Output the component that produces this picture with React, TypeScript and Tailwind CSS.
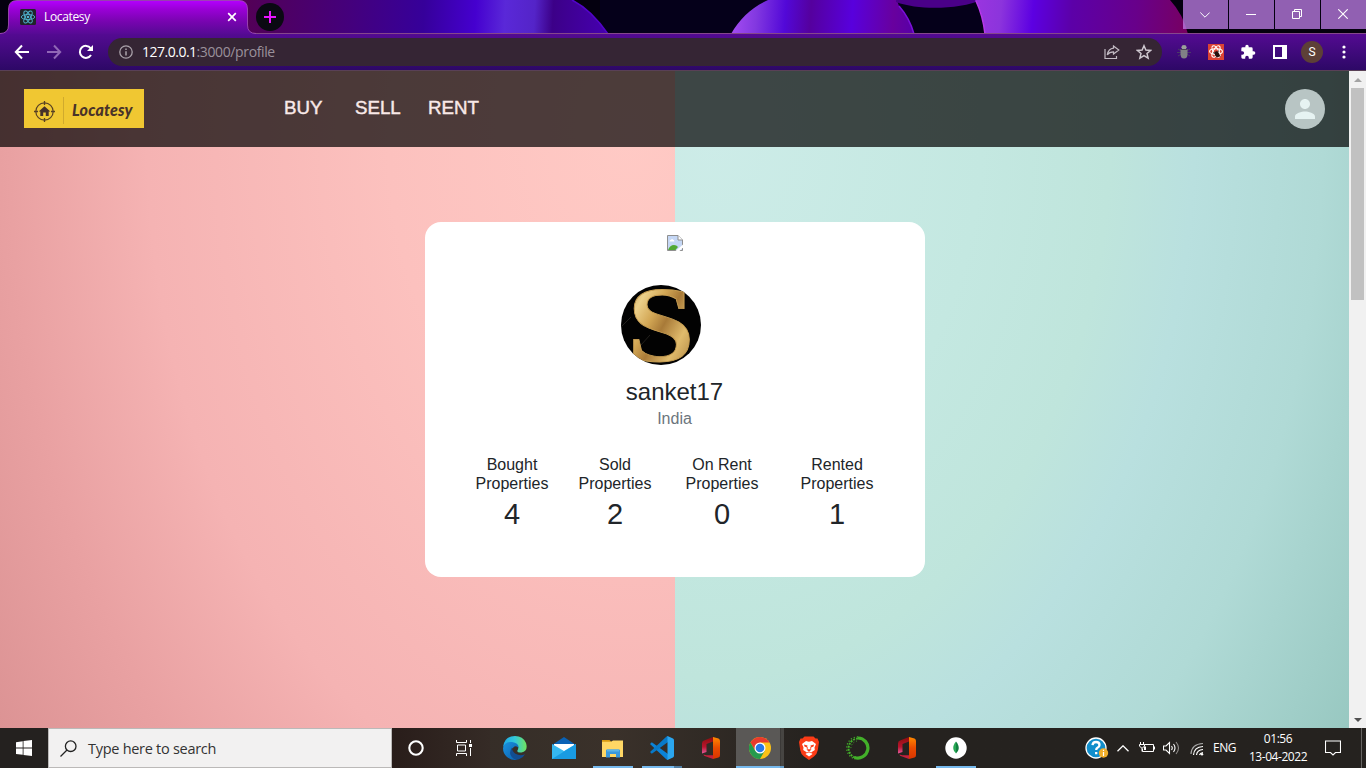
import React from "react";

const ui = "font-['Open_Sans','Noto_Sans',sans-serif]";

function StripArt() {
  return (
    <svg className="absolute inset-0" width="1366" height="34" viewBox="0 0 1366 34">
      <defs>
        <linearGradient id="orbA" gradientUnits="userSpaceOnUse" x1="240" y1="0" x2="608" y2="20">
          <stop offset="0" stopColor="#540054" />
          <stop offset=".3" stopColor="#44007c" />
          <stop offset=".5" stopColor="#36009a" />
          <stop offset=".64" stopColor="#4500cf" />
          <stop offset=".72" stopColor="#5a28d8" />
          <stop offset=".8" stopColor="#5424c8" />
          <stop offset=".85" stopColor="#3c0088" />
          <stop offset="1" stopColor="#4600b0" />
        </linearGradient>
        <linearGradient id="orbB" gradientUnits="userSpaceOnUse" x1="735" y1="10" x2="915" y2="22">
          <stop offset="0" stopColor="#a14af0" />
          <stop offset=".12" stopColor="#8238e0" />
          <stop offset=".28" stopColor="#5208d8" />
          <stop offset=".42" stopColor="#55009e" />
          <stop offset=".65" stopColor="#5800dd" />
          <stop offset=".88" stopColor="#68009e" />
          <stop offset="1" stopColor="#5700a8" />
        </linearGradient>
        <linearGradient id="orbC" gradientUnits="userSpaceOnUse" x1="976" y1="0" x2="1190" y2="20">
          <stop offset="0" stopColor="#9a35df" />
          <stop offset=".12" stopColor="#8c34dc" />
          <stop offset=".27" stopColor="#5c00e2" />
          <stop offset=".45" stopColor="#5c00a8" />
          <stop offset=".75" stopColor="#68008a" />
          <stop offset="1" stopColor="#780060" />
        </linearGradient>
        <linearGradient id="tabFill" x1="0" y1="0" x2="0" y2="1">
          <stop offset="0" stopColor="#b400ff" />
          <stop offset=".25" stopColor="#9b00d8" />
          <stop offset=".6" stopColor="#7a04b2" />
          <stop offset="1" stopColor="#560a94" />
        </linearGradient>
      </defs>
      <rect width="1366" height="34" fill="#04000f" />
      <rect x="600" width="390" height="34" fill="#05001a" />
      <path d="M200 0H572C588 8 599 21 608 34H200Z" fill="url(#orbA)" />
      <path d="M572 0C588 8 599 21 608 34" fill="none" stroke="#5204c8" strokeWidth="1.500" />
      <path d="M731 34C740 18 752 7 768 0H897L899 6C906 14 911 23 914 34Z" fill="url(#orbB)" />
      <path d="M899 6C906 14 911 23 914 34" fill="none" stroke="#7a10d8" strokeWidth="1.500" />
      <path d="M896 0H982C960 9 920 11 896 2Z" fill="#4a0088" />
      <path d="M975 0H1170Q1183 14 1188 34H985Q983 14 975 0Z" fill="url(#orbC)" />
      <path d="M976 1Q983 16 985 34" fill="none" stroke="#b838e8" strokeWidth="1.500" />
      <path d="M0 33.500H1366" stroke="#85478c" />
      <path d="M0 34V33.500Q8.500 33 8.500 25V9Q8.500 .5 17 .5H239Q247.500 .5 247.500 9V25Q247.500 33.500 256 33.500V34Z" fill="url(#tabFill)" />
      <path d="M0 33.500Q8.500 33.500 8.500 25V9Q8.500 .5 17 .5H239Q247.500 .5 247.500 9V25Q247.500 33.500 256 33.500" fill="none" stroke="#a452b8" strokeOpacity=".8" />
    </svg>
  );
}

function Atom({ size, color, bg }: { size: number; color: string; bg: string }) {
  return (
    <svg width={size} height={size} viewBox="0 0 16 16">
      <rect width="16" height="16" rx="1.500" fill={bg} />
      <g fill="none" stroke={color} strokeWidth=".9">
        <ellipse cx="8" cy="8" rx="6.700" ry="2.600" />
        <ellipse cx="8" cy="8" rx="6.700" ry="2.600" transform="rotate(60 8 8)" />
        <ellipse cx="8" cy="8" rx="6.700" ry="2.600" transform="rotate(120 8 8)" />
      </g>
      <circle cx="8" cy="8" r="1.300" fill={color} />
    </svg>
  );
}

function TabStrip() {
  const cell = "flex h-[29px] items-center justify-center bg-[#c080ea]/75";
  return (
    <div className="relative h-[34px] shrink-0">
      <StripArt />
      <div className="relative flex h-full">
        <div className="flex w-[240px] items-center ml-2 pl-3">
          <Atom size={16} color="#4fb4cf" bg="#20232a" />
          <span className={`${ui} ml-2 w-[168px] text-[12px] leading-4 tracking-[-0.35px] text-white`}>Locatesy</span>
          <svg className="ml-[15px]" width="10" height="10" viewBox="0 0 10 10">
            <path d="M1.200 1.200L8.800 8.800M8.800 1.200L1.200 8.800" stroke="#fff" strokeWidth="1.700" />
          </svg>
        </div>
        <div className="ml-2 mt-[3px] flex size-7 items-center justify-center rounded-full bg-[#0a0912]">
          <svg width="12" height="12" viewBox="0 0 12 12"><path d="M6 0V12M0 6H12" stroke="#e815ff" strokeWidth="2" /></svg>
        </div>
        <div className="ml-auto flex h-[29px] gap-px">
          <div className={`${cell} w-[45px]`}>
            <svg className="-ml-[2px]" width="10" height="6" viewBox="0 0 10 6"><path d="M.3 .5L5 5.200L9.700 .5" fill="none" stroke="#fff" strokeWidth="1" /></svg>
          </div>
          <div className={`${cell} w-[45px]`}><div className="mr-[2px] h-px w-[10px] bg-white" /></div>
          <div className={`${cell} w-[45px]`}>
            <svg className="-ml-[2px] -mt-px" width="10" height="10" viewBox="0 0 10 10" fill="none" stroke="#fff"><path d="M.5 2.500H7.500V9.500H.5ZM2.500 2.500V.5H9.500V7.500H7.500" /></svg>
          </div>
          <div className={`${cell} w-[45px]`}>
            <svg className="-ml-[2px] -mt-px" width="10" height="10" viewBox="0 0 10 10"><path d="M.3 .3L9.700 9.700M9.700 .3L.3 9.700" stroke="#fff" strokeWidth="1.100" /></svg>
          </div>
        </div>
      </div>
    </div>
  );
}

function Toolbar() {
  return (
    <div className="flex h-[37px] shrink-0 items-center border-b border-[#594056] bg-linear-to-b from-[#540a92] via-[#400a7c] to-[#2d0866] text-white">
      <svg className="ml-[14px]" width="16" height="16" viewBox="0 0 16 16" fill="none" stroke="#fff" strokeWidth="2"><path d="M15 8H2M8 1.500L1.800 8L8 14.500" /></svg>
      <svg className="ml-4" width="16" height="16" viewBox="0 0 16 16" fill="none" stroke="#9067b6" strokeWidth="2"><path d="M1 8H14M8 1.500L14.200 8L8 14.500" /></svg>
      <svg className="ml-4" width="16" height="16" viewBox="0 0 16 16"><path d="M13 11A6 6 0 1 1 12.700 4.300" fill="none" stroke="#fff" strokeWidth="2" /><path d="M15 1V7H9Z" fill="#fff" /></svg>
      <div className="ml-[14px] flex h-7 w-[1054px] items-center rounded-full bg-[#352534]">
        <svg className="ml-[11px]" width="14" height="14" viewBox="0 0 14 14"><circle cx="7" cy="7" r="6.200" fill="none" stroke="#aaa2aa" strokeWidth="1.300" /><path d="M7 6.200V10.500M7 3.500V5" stroke="#aaa2aa" strokeWidth="1.500" /></svg>
        <span className={`${ui} ml-[9px] text-[14px] leading-5 tracking-[-0.38px] text-[#9a919b]`}><span className="tracking-[-0.5px] text-white">127.0.0.1</span>:3000/profile</span>
        <svg className="ml-auto" width="16" height="15" viewBox="0 0 16 15" fill="none" stroke="#c3bbc4" strokeWidth="1.200"><path d="M1 4V13.500H12.500V11M9.500 1L14.800 5L9.500 9V6.800C6.500 6.800 4.800 7.700 3.200 9.800C4 6 6 3.600 9.500 3.200Z" /></svg>
        <svg className="ml-4 mr-[10px]" width="16" height="16" viewBox="0 0 24 24" fill="none" stroke="#cfc8d0" strokeWidth="2.200"><path d="M12 2.500L14.800 9L22 9.600L16.500 14.200L18.200 21.200L12 17.500L5.800 21.200L7.500 14.200L2 9.600L9.200 9Z" /></svg>
      </div>
      <svg className="ml-[14px]" width="16" height="16" viewBox="0 0 16 16"><path d="M2 5L14 12M14 5L2 12M1 8.500H15" stroke="#4a3a66" strokeWidth="1" /><ellipse cx="8" cy="3.200" rx="2.600" ry="2.200" fill="#9aa09a" /><path d="M4.500 5H11.500V10Q11.500 14.500 8 14.500Q4.500 14.500 4.500 10Z" fill="#808086" /><path d="M4.800 5.500H11.200" stroke="#4d4258" /></svg>
      <svg className="ml-4" width="16" height="16" viewBox="0 0 16 16"><rect width="16" height="16" fill="#dc4334" /><g fill="none" stroke="#fff" strokeWidth="1.100"><ellipse cx="8" cy="7.500" rx="6.400" ry="2.700" /><ellipse cx="8" cy="7.500" rx="6.400" ry="2.700" transform="rotate(60 8 7.500)" /><ellipse cx="8" cy="7.500" rx="6.400" ry="2.700" transform="rotate(120 8 7.500)" /></g><path d="M6.500 8L9 7L11 9.500L12 12L9.500 13.500L7 11.500Z" fill="#24120f" /><path d="M5 8.500L12.500 12.500M10.500 6.500L8 13.500" stroke="#24120f" strokeWidth=".8" /></svg>
      <svg className="ml-4" width="16" height="16" viewBox="0 0 24 24" fill="#fff"><path d="M20.500 11H19V7a2 2 0 0 0-2-2h-4V3.500a2.500 2.500 0 0 0-5 0V5H4a2 2 0 0 0-2 2v3.800h1.500a2.700 2.700 0 0 1 0 5.400H2V20a2 2 0 0 0 2 2h3.800v-1.500a2.700 2.700 0 0 1 5.400 0V22H17a2 2 0 0 0 2-2v-4h1.500a2.500 2.500 0 0 0 0-5z" /></svg>
      <svg className="ml-[17px]" width="14" height="14" viewBox="0 0 14 14"><path fillRule="evenodd" d="M0 0H14V14H0ZM2 2V12H9V2Z" fill="#fff" /></svg>
      <div className="ml-[14px] flex size-[22px] items-center justify-center rounded-full bg-[#5d4037] font-[Roboto,sans-serif] text-[12px] text-white">S</div>
      <svg className="ml-[19px]" width="4" height="14" viewBox="0 0 4 14" fill="#fff"><circle cx="2" cy="2" r="1.600" /><circle cx="2" cy="7" r="1.600" /><circle cx="2" cy="12" r="1.600" /></svg>
    </div>
  );
}

function Logo() {
  return (
    <div className="mb-px flex h-[39px] w-[120px] items-center bg-[#f0c732]">
      <svg className="ml-[10px] mt-[6px]" width="21" height="21" viewBox="0 0 21 21"><circle cx="10.500" cy="10.500" r="8.700" fill="none" stroke="#584124" strokeWidth="1.200" /><path d="M10.500 0V4M10.500 17V21M0 10.500H4M17 10.500H21" stroke="#584124" strokeWidth="1.300" /><path d="M10.500 5.200L4.700 10.500H6.300V15H9.200V11.500H11.800V15H14.700V10.500H16.300Z" fill="#46302a" /></svg>
      <div className="ml-2 mt-[3px] h-[27px] w-px bg-[#d0aa2d]" />
      <span className="ml-[8px] mt-[2px] font-[Lato,sans-serif] text-[16px] font-black italic leading-5 tracking-[0.18px] text-[#493329]">Locatesy</span>
    </div>
  );
}

const stats = [
  { label: "Bought", value: 4, box: "w-[73px]" },
  { label: "Sold", value: 2, box: "w-[73px] ml-[30px]" },
  { label: "On Rent", value: 0, box: "w-[73px] ml-[34px]" },
  { label: "Rented", value: 1, box: "w-[73px] ml-[42px]" },
];

function BrokenImage() {
  return (
    <svg width="16" height="16" viewBox="0 0 16 16">
      <path d="M.5 .5H11L15.500 5V15.500H.5Z" fill="#c5d7f5" stroke="#8f8f8f" />
      <path d="M11 .5V5H15.500" fill="#fff" stroke="#8f8f8f" />
      <path d="M2.500 6.500Q2.500 4.800 4 4.800Q5 3.300 6.200 4.800Q7.500 5 7.300 6.500Z" fill="#fff" />
      <path d="M1 15Q3 10 7 10Q9.500 10 11 12L8.500 15Z" fill="#52a934" />
      <path d="M8.500 16L16 9.500V12.500L12.500 16Z" fill="#fff" />
    </svg>
  );
}

function Avatar() {
  return (
    <svg width="80" height="80" viewBox="0 0 80 80">
      <defs>
        <linearGradient id="gold" x1="0" y1="0" x2="1" y2="1">
          <stop offset="0" stopColor="#a57a34" />
          <stop offset=".25" stopColor="#ecd08a" />
          <stop offset=".4" stopColor="#d2a654" />
          <stop offset=".52" stopColor="#a87a38" />
          <stop offset=".7" stopColor="#e0bb6c" />
          <stop offset="1" stopColor="#94692b" />
        </linearGradient>
        <clipPath id="round"><circle cx="40" cy="40" r="40" /></clipPath>
      </defs>
      <g clipPath="url(#round)">
        <rect width="80" height="80" fill="#020202" />
        <path d="M0 42L10 32M20 60L29 50" stroke="#22201d" />
        <text transform="translate(40 76) scale(1.120 1)" textAnchor="middle" fontFamily="Liberation Serif, serif" fontWeight="700" fontSize="108" fill="url(#gold)" stroke="#c99f52" strokeWidth=".8">S</text>
      </g>
    </svg>
  );
}

function Page() {
  return (
    <div className="flex min-h-0 flex-1">
      <div className="relative flex w-[1349px] flex-col">
        <div className="absolute inset-0 flex">
          <div className="w-[675px] bg-[radial-gradient(ellipse_690px_1000px_at_630px_60px,#ffcac5_0%,#fcc1be_35%,#f5b3b3_70%,#e9a1a2_90%,#d88f90_115%)]" />
          <div className="flex-1 bg-[radial-gradient(ellipse_760px_1050px_at_40px_60px,#cdece8_0%,#c4e8e1_35%,#bfe5dc_52%,#b9e0df_63%,#b0dad6_80%,#90c2ba_108%)]" />
        </div>
        <div className="relative flex h-[76px] items-center bg-black/70 px-6">
          <Logo />
          <div className="ml-[140px] flex pb-[3px] font-['Liberation_Sans',Arial,sans-serif] text-[18.700px] leading-6 text-[#f9e9e8] [-webkit-text-stroke:0.45px_#f9e9e8]">
            <span className="w-[71px]">BUY</span>
            <span className="w-[73px]">SELL</span>
            <span>RENT</span>
          </div>
          <div className="ml-auto flex size-10 items-center justify-center rounded-full bg-[#b8c5c4]">
            <svg width="30" height="30" viewBox="0 0 24 24" fill="#e6f3f2"><path d="M12 12c2.210 0 4-1.790 4-4s-1.790-4-4-4-4 1.790-4 4 1.790 4 4 4zm0 2c-2.670 0-8 1.340-8 4v2h16v-2c0-2.660-5.330-4-8-4z" /></svg>
          </div>
        </div>
        <div className="relative mx-auto mt-[75px] flex h-[355px] w-[500px] flex-col items-center rounded-[16px] bg-white pt-[13px] font-['Liberation_Sans',Arial,sans-serif] text-[#212529]">
          <BrokenImage />
          <div className="mr-[28px] mt-[34px]"><Avatar /></div>
          <div className="mt-3 text-[24px] leading-[29px]">sanket17</div>
          <div className="mt-px text-[16px] leading-6 text-[#6c757d]">India</div>
          <div className="mt-6 flex w-[398px]">
            {stats.map((s) => (
              <div key={s.label} className={`${s.box} text-center`}>
                <div className="text-[16px] leading-[19px]">{s.label}<br />Properties</div>
                <div className="mt-[3px] text-[29px] leading-[36px]">{s.value}</div>
              </div>
            ))}
          </div>
        </div>
      </div>
      <div className="flex w-[17px] flex-col items-center bg-[#f1f1f1]">
        <div className="flex h-[17px] items-center"><svg width="8" height="4" viewBox="0 0 8 4"><path d="M0 4L4 0L8 4Z" fill="#a3a3a3" /></svg></div>
        <div className="h-[212px] w-[13px] bg-[#c1c1c1]" />
        <div className="mt-auto flex h-[17px] items-center"><svg width="8" height="4" viewBox="0 0 8 4"><path d="M0 0L4 4L8 0Z" fill="#505050" /></svg></div>
      </div>
    </div>
  );
}

function Office() {
  return (
    <svg width="20" height="24" viewBox="0 0 20 24">
      <defs>
        <linearGradient id="offL" x1="0" y1="0" x2="0" y2="1"><stop offset="0" stopColor="#8c0d0d" /><stop offset=".6" stopColor="#b8152e" /><stop offset="1" stopColor="#e5589b" /></linearGradient>
        <linearGradient id="offR" x1="0" y1="0" x2="0" y2="1"><stop offset="0" stopColor="#ff8a00" /><stop offset=".5" stopColor="#e84a00" /><stop offset="1" stopColor="#d83500" /></linearGradient>
      </defs>
      <path d="M12 1L3 4.500Q1 5.200 1 7.500V17.500L5.500 16V8L12 5.500Z" fill="url(#offL)" />
      <path d="M12 1L17.500 2.500Q19 3 19 5V19Q19 21 17.500 21.500L12 23Z" fill="url(#offR)" />
      <path d="M2.500 18.500L5.500 19.300H12V23L3 19.800Z" fill="#c4203c" />
    </svg>
  );
}

function Edge() {
  return (
    <svg width="24" height="24" viewBox="0 0 24 24">
      <defs>
        <linearGradient id="edTop" x1="0" y1=".5" x2="1" y2=".5"><stop offset="0" stopColor="#1da7e8" /><stop offset=".5" stopColor="#33c9da" /><stop offset="1" stopColor="#70e35d" /></linearGradient>
        <linearGradient id="edSide" x1="0" y1="0" x2="1" y2="1"><stop offset="0" stopColor="#1b93df" /><stop offset="1" stopColor="#0a5fae" /></linearGradient>
      </defs>
      <path d="M0 11Q1.500 0 12 0Q20 0 23 7Q25.500 15 18.500 16.500Q14.500 17 14.200 15Q17.500 9.500 11 7.500Q4 6 0 11Z" fill="url(#edTop)" />
      <path d="M0 12Q1.500 5.500 9 6Q16 7 15.500 12Q14 9.500 11.500 10.500Q7 13 9 18Q11.500 23.500 15 23.500Q9 25 4 21Q0 17.500 0 12Z" fill="url(#edSide)" />
      <path d="M9 11.500Q4.500 18 10.500 22.500Q12 24 16 23.300Q20 22 22 18.200Q17 20.500 12.500 17.800Q9 15.500 9 11.500Z" fill="#124d91" />
    </svg>
  );
}

function Mail() {
  return (
    <svg width="24" height="22" viewBox="0 0 24 22">
      <path d="M0 8L12 0L24 8V10H0Z" fill="#0a62b5" />
      <path d="M2 7H22V14H2Z" fill="#fff" />
      <path d="M0 7L12 14L24 7V22H0Z" fill="#35b8f1" />
      <path d="M0 22L24 7V22Z" fill="#199be2" />
    </svg>
  );
}

function Explorer() {
  return (
    <svg width="22" height="19" viewBox="0 0 22 19">
      <path d="M0 1H7.500L10 3.500H0Z" fill="#d99b12" />
      <path d="M0 2.700H9L11 1.500H21V18H0Z" fill="#ffd765" />
      <path d="M4 18.500V11.500Q4 10.500 5 10.500H17Q18 10.500 18 11.500V18.500H14V15H8V18.500Z" fill="#3b99dc" />
      <path d="M5 10.500H17V12.500H5Z" fill="#5cb5e8" />
    </svg>
  );
}

function Code() {
  return (
    <svg width="24" height="24" viewBox="0 0 24 24">
      <path d="M0 8L1.800 6.300L6 9.200L18 18V24Q17 24 16 23Z" fill="#0b83d8" />
      <path d="M0 16L1.800 17.700L6 14.800L18 6V0Q17 0 16 1Z" fill="#087ac9" />
      <path d="M17.500 0L23 2.500Q24 3 24 4.300V19.700Q24 21 23 21.500L17.500 24Z" fill="#2ba6ef" />
    </svg>
  );
}

function Chrome() {
  return (
    <svg width="22" height="22" viewBox="0 0 22 22">
      <circle cx="11" cy="11" r="11" fill="#fbc116" />
      <path d="M1.500 5.500A11 11 0 0 1 20.530 5.500H11L6.240 13.750Z" fill="#e83a2d" />
      <path d="M1.470 5.500A11 11 0 0 0 11 22L15.760 13.750H6.240Z" fill="#259a4d" />
      <circle cx="11" cy="11" r="5.500" fill="#fff" />
      <circle cx="11" cy="11" r="4.300" fill="#2878e8" />
    </svg>
  );
}

function Brave() {
  return (
    <svg width="20" height="24" viewBox="0 0 20 24">
      <path d="M5.500 .5H14.500L16.500 2.500L18.500 2.500L20 6L18.800 14Q18 18.500 15 20.500L10 24L5 20.500Q2 18.500 1.200 14L0 6L1.500 2.500L3.500 2.500Z" fill="#fb3b16" />
      <path d="M7 5L10 5.700L13 5L17 8L15.500 11.500L15.800 14L12 16.500L13.500 18L10 20.500L6.500 18L8 16.500L4.200 14L4.500 11.500L3 8Z" fill="#fff" />
      <path d="M5 8.500L8.500 9.500L8 11.500L5.500 10.500ZM15 8.500L11.500 9.500L12 11.500L14.500 10.500ZM8 14L10 13L12 14L10 15.800Z" fill="#fb3b16" />
      <path d="M8.300 11V14M11.700 11V14M7.500 17L10 16L12.500 17" fill="none" stroke="#fb3b16" strokeWidth=".8" />
    </svg>
  );
}

function Anaconda() {
  return (
    <svg width="24" height="24" viewBox="0 0 24 24" fill="none" stroke="#43b02a">
      <path d="M12 2A10 10 0 1 1 8.500 21.400" strokeWidth="3.200" />
      <path d="M12 2.500A9.800 9.800 0 0 0 9 21.500" strokeWidth="2" strokeDasharray="2 1.100" />
      <path d="M12 .8A11.300 11.300 0 0 0 9 23" strokeWidth="1.200" strokeDasharray="1.200 2" />
      <path d="M11 5A7.700 7.700 0 0 0 5 14" strokeWidth="1" strokeDasharray="1 2" />
    </svg>
  );
}

function Mongo() {
  return (
    <svg width="22" height="22" viewBox="0 0 22 22">
      <circle cx="11" cy="11" r="10.700" fill="#fff" />
      <path d="M11 4.500Q7.800 8 8.300 12Q8.700 14.500 11 16.500Z" fill="#27a854" />
      <path d="M11 4.500Q14.200 8 13.700 12Q13.300 14.500 11 16.500Z" fill="#118040" />
    </svg>
  );
}

const apps = [
  { id: "edge", icon: <Edge />, bar: "" },
  { id: "mail", icon: <Mail />, bar: "" },
  { id: "files", icon: <Explorer />, bar: "one" },
  { id: "code", icon: <Code />, bar: "many" },
  { id: "office", icon: <Office />, bar: "" },
  { id: "chrome", icon: <Chrome />, bar: "active" },
  { id: "brave", icon: <Brave />, bar: "" },
  { id: "conda", icon: <Anaconda />, bar: "" },
  { id: "office2", icon: <Office />, bar: "" },
  { id: "mongo", icon: <Mongo />, bar: "one" },
];

function TaskApp({ icon, bar }: { icon: React.ReactNode; bar: string }) {
  const active = bar === "active";
  return (
    <div className={`flex h-10 flex-col items-center ${active ? "ml-px w-12 bg-linear-to-r from-[#5a5856] from-91% via-[#353331] via-92% to-[#474542] to-94%" : "w-[49px]"}`}>
      <div className="flex h-[38px] w-full items-center justify-center pt-[2px]">{icon}</div>
      {bar === "one" && <div className="h-[2px] w-10 bg-[#76b9ed]" />}
      {bar === "many" && <div className="flex h-[2px] w-10"><div className="w-8 bg-[#76b9ed]" /><div className="flex-1 bg-[#527fa3]" /></div>}
      {active && <div className="flex h-[2px] w-full"><div className="w-11 bg-[#76b9ed]" /><div className="flex-1 bg-[#649bc7]" /></div>}
    </div>
  );
}

function Taskbar() {
  return (
    <div className="flex h-10 shrink-0 items-center bg-linear-to-r from-[#25221f] from-0% via-[#3a312a] via-45% to-[#25221f] to-60% text-white">
      <div className="flex h-10 w-12 items-center justify-center bg-[#24211f]">
        <svg width="16" height="16" viewBox="0 0 16 16" fill="#fff"><path d="M0 2.200L6.700 1.200V7.600H0ZM7.500 1.100L16 0V7.600H7.500ZM0 8.400H6.700V14.800L0 13.900ZM7.500 8.400H16V16L7.500 14.900Z" /></svg>
      </div>
      <div className="flex h-10 w-[344px] items-center border border-[#bbb9b8] bg-[#f2f1f1] text-[#333]">
        <svg className="ml-[11px]" width="17" height="17" viewBox="0 0 17 17" fill="none" stroke="#222" strokeWidth="1.300"><circle cx="10.700" cy="6.200" r="5.300" /><path d="M7 10L.5 16.500" /></svg>
        <span className={`${ui} ml-[11px] pt-px text-[14.500px] leading-5 tracking-[-0.28px]`}>Type here to search</span>
      </div>
      <div className="flex h-10 w-[98px] items-center bg-linear-to-r from-[#291d1a] to-[#352b26]">
        <div className="flex w-12 justify-center"><svg width="16" height="16" viewBox="0 0 16 16"><circle cx="8" cy="8" r="6.700" fill="none" stroke="#fff" strokeWidth="2.100" /></svg></div>
        <div className="flex w-12 justify-center"><svg width="16" height="16" viewBox="0 0 16 16" fill="none" stroke="#fff"><path d="M.5 0V2.500H10.500V0M.5 16V13.500H10.500V16M1.500 5H9.500V11H1.500ZM14.500 0V3M14.500 8V16" /><rect x="13" y="4" width="3" height="3" fill="#fff" stroke="none" /></svg></div>
      </div>
      <div className="flex">{apps.map((a) => <TaskApp key={a.id} icon={a.icon} bar={a.bar} />)}</div>
      <div className="ml-auto flex h-10 items-center">
        <svg width="24" height="22" viewBox="0 0 24 22"><circle cx="11" cy="11" r="10" fill="#118ecb" stroke="#fff" strokeWidth="1.300" /><path d="M7.500 8.200Q7.800 5 11 5Q14.500 5 14.500 8Q14.500 9.700 12.500 10.800Q11.200 11.500 11.200 13M11.200 15V17.300" fill="none" stroke="#fff" strokeWidth="2.300" /><circle cx="18.500" cy="16" r="4.700" fill="#f1af2b" /><path d="M18.500 15V19M18.500 12.700V14" stroke="#fff" strokeWidth="1.200" /></svg>
        <svg className="ml-2" width="12" height="7" viewBox="0 0 12 7"><path d="M.5 6.200L6 .8L11.500 6.200" fill="none" stroke="#fff" strokeWidth="1.300" /></svg>
        <svg className="ml-[10px]" width="16" height="12" viewBox="0 0 16 12" fill="none" stroke="#fff"><path d="M5.500 2.500H14.500V9.500H3.500V7M15.500 4.500V7.500M1.500 0V2M4.500 0V2M.5 2.500H5.500V4L3.500 6H2.500L.5 4ZM3 6V9.500" /><path d="M5 4.500H7V8H5Z" fill="#fff" stroke="none" /></svg>
        <svg className="ml-2" width="17" height="14" viewBox="0 0 17 14" fill="none" stroke="#fff" strokeWidth="1.100"><path d="M.5 5H3L6.500 1.500V12.500L3 9H.5ZM8.500 5Q10 7 8.500 9M10.500 3Q13.500 7 10.500 11" /><path d="M13 1Q18 7 13 13" stroke="#908d8b" /></svg>
        <svg className="ml-[10px] mt-[2px]" width="14" height="14" viewBox="0 0 14 14" fill="none" strokeWidth="1.200"><path d="M1 12Q1.500 2 13 1.500" stroke="#aaa" /><path d="M3.500 13Q4 5 13 4.500M6.500 13Q7 8 13 7.500M9.500 13Q10 11 13 10.500" stroke="#fff" /><circle cx="12" cy="12.200" r="1.200" fill="#fff" /></svg>
        <span className={`${ui} ml-[9px] w-[24px] whitespace-nowrap text-[12px] leading-4 tracking-[-0.5px]`}>ENG</span>
        <div className={`${ui} ml-2 w-[66px] whitespace-nowrap text-center text-[12px] leading-[18px] tracking-[-0.45px]`}><div>01:56</div><div>13-04-2022</div></div>
        <svg className="ml-[14px] mr-[20px]" width="16" height="16" viewBox="0 0 16 16" fill="none" stroke="#fff" strokeWidth="1.100"><path d="M.5 1H15.500V12.500H10.500L8 15L5.500 12.500H.5Z" /></svg>
        <div className="mr-[4px] h-10 w-px bg-[#666462]" />
      </div>
    </div>
  );
}

export default function App() {
  return (
    <div className="flex h-[768px] w-[1366px] flex-col overflow-hidden">
      <TabStrip />
      <Toolbar />
      <Page />
      <Taskbar />
    </div>
  );
}
